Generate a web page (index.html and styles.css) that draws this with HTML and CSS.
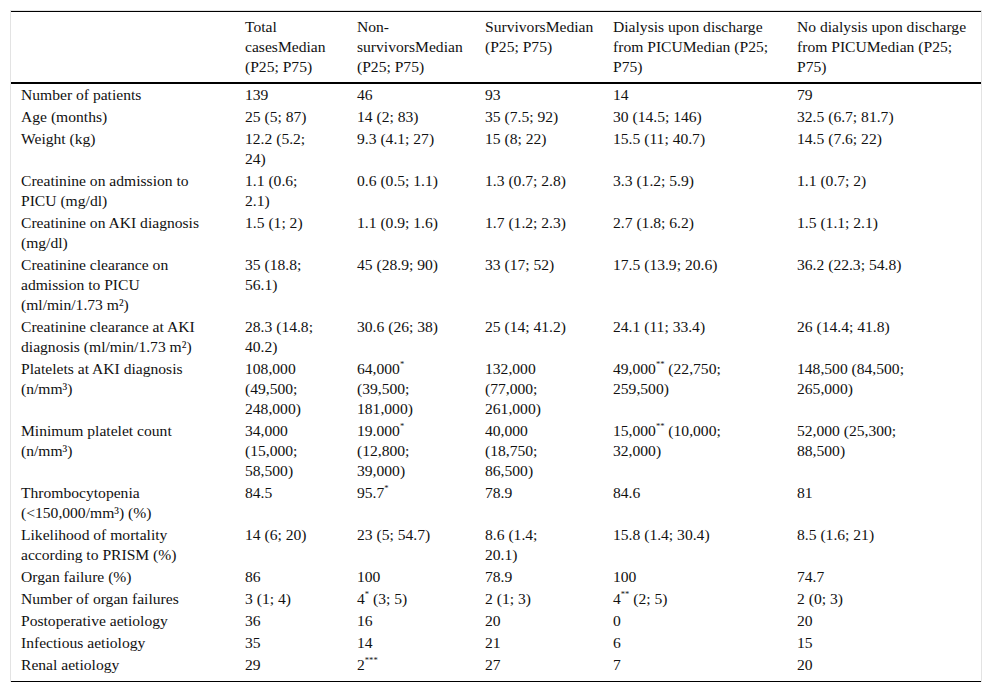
FILE: index.html
```html
<!DOCTYPE html>
<html lang="en">
<head>
<meta charset="utf-8">
<title>Patient characteristics</title>
<link rel="stylesheet" href="styles.css">
</head>
<body>
<div class="table-box">
<table class="data">
<colgroup>
<col class="c1"><col class="c2"><col class="c3"><col class="c4"><col class="c5"><col class="c6">
</colgroup>
<thead>
<tr>
<th></th>
<th>Total casesMedian (P25; P75)</th>
<th>Non-survivorsMedian (P25; P75)</th>
<th>SurvivorsMedian (P25; P75)</th>
<th>Dialysis upon discharge from PICUMedian (P25; P75)</th>
<th>No dialysis upon discharge from PICUMedian (P25; P75)</th>
</tr>
</thead>
<tbody>
<tr><td>Number of patients</td><td>139</td><td>46</td><td>93</td><td>14</td><td>79</td></tr>
<tr><td>Age (months)</td><td>25 (5; 87)</td><td>14 (2; 83)</td><td>35 (7.5; 92)</td><td>30 (14.5; 146)</td><td>32.5 (6.7; 81.7)</td></tr>
<tr><td>Weight (kg)</td><td>12.2 (5.2; 24)</td><td>9.3 (4.1; 27)</td><td>15 (8; 22)</td><td>15.5 (11; 40.7)</td><td>14.5 (7.6; 22)</td></tr>
<tr><td>Creatinine on admission to PICU (mg/dl)</td><td>1.1 (0.6; 2.1)</td><td>0.6 (0.5; 1.1)</td><td>1.3 (0.7; 2.8)</td><td>3.3 (1.2; 5.9)</td><td>1.1 (0.7; 2)</td></tr>
<tr><td>Creatinine on AKI diagnosis (mg/dl)</td><td>1.5 (1; 2)</td><td>1.1 (0.9; 1.6)</td><td>1.7 (1.2; 2.3)</td><td>2.7 (1.8; 6.2)</td><td>1.5 (1.1; 2.1)</td></tr>
<tr><td>Creatinine clearance on admission to PICU (ml/min/1.73 m²)</td><td>35 (18.8; 56.1)</td><td>45 (28.9; 90)</td><td>33 (17; 52)</td><td>17.5 (13.9; 20.6)</td><td>36.2 (22.3; 54.8)</td></tr>
<tr><td>Creatinine clearance at AKI diagnosis (ml/min/1.73 m²)</td><td>28.3 (14.8; 40.2)</td><td>30.6 (26; 38)</td><td>25 (14; 41.2)</td><td>24.1 (11; 33.4)</td><td>26 (14.4; 41.8)</td></tr>
<tr><td>Platelets at AKI diagnosis (n/mm³)</td><td>108,000 (49,500; 248,000)</td><td>64,000<sup class="star">*</sup> (39,500; 181,000)</td><td>132,000 (77,000; 261,000)</td><td>49,000<sup class="star">**</sup> (22,750; 259,500)</td><td>148,500 (84,500; 265,000)</td></tr>
<tr><td>Minimum platelet count (n/mm³)</td><td>34,000 (15,000; 58,500)</td><td>19.000<sup class="star">*</sup> (12,800; 39,000)</td><td>40,000 (18,750; 86,500)</td><td>15,000<sup class="star">**</sup> (10,000; 32,000)</td><td>52,000 (25,300; 88,500)</td></tr>
<tr><td>Thrombocytopenia (&lt;150,000/mm³) (%)</td><td>84.5</td><td>95.7<sup class="star">*</sup></td><td>78.9</td><td>84.6</td><td>81</td></tr>
<tr><td>Likelihood of mortality according to PRISM (%)</td><td>14 (6; 20)</td><td>23 (5; 54.7)</td><td>8.6 (1.4; 20.1)</td><td>15.8 (1.4; 30.4)</td><td>8.5 (1.6; 21)</td></tr>
<tr><td>Organ failure (%)</td><td>86</td><td>100</td><td>78.9</td><td>100</td><td>74.7</td></tr>
<tr><td>Number of organ failures</td><td>3 (1; 4)</td><td>4<sup class="star">*</sup> (3; 5)</td><td>2 (1; 3)</td><td>4<sup class="star">**</sup> (2; 5)</td><td>2 (0; 3)</td></tr>
<tr><td>Postoperative aetiology</td><td>36</td><td>16</td><td>20</td><td>0</td><td>20</td></tr>
<tr><td>Infectious aetiology</td><td>35</td><td>14</td><td>21</td><td>6</td><td>15</td></tr>
<tr class="last"><td>Renal aetiology</td><td>29</td><td>2<sup class="star">***</sup></td><td>27</td><td>7</td><td>20</td></tr>
</tbody>
</table>
</div>
</body>
</html>
```

FILE: styles.css
```css
html, body {
  background: #ffffff;
}

body {
  margin: 10px;
  font-family: "Liberation Serif", "Times New Roman", serif;
  font-size: 15.6px;
  line-height: 20px;
  color: #111111;
}

.table-box {
  border: 1px solid #e3e3e3;
  border-bottom: none;
}

.data {
  width: 100%;
  border-collapse: collapse;
  table-layout: fixed;
  border-top: 1px solid #000;
  border-bottom: 1px solid #000;
}

.c1 { width: 224px; }
.c2 { width: 112px; }
.c3 { width: 128px; }
.c4 { width: 128px; }
.c5 { width: 184px; }
.c6 { width: 194px; }

.data th {
  font-weight: normal;
  text-align: left;
  vertical-align: top;
  padding: 5px 3px 5px 10px;
  border-bottom: 2px solid #000;
}

.data td {
  text-align: left;
  vertical-align: top;
  padding: 1px 30px 1px 10px;
}

.data td:nth-child(1) { padding-right: 25px; }
.data td:nth-child(2) { padding-right: 26px; }
.data td:nth-child(3) { padding-right: 30px; }
.data td:nth-child(4) { padding-right: 33px; }
.data td:nth-child(5) { padding-right: 30px; }
.data td:nth-child(6) { padding-right: 55px; }

.data .last td {
  padding-bottom: 6px;
}

sup.star {
  font-size: 0.55em;
  line-height: 0;
  vertical-align: baseline;
  position: relative;
  top: -0.85em;
}
```
